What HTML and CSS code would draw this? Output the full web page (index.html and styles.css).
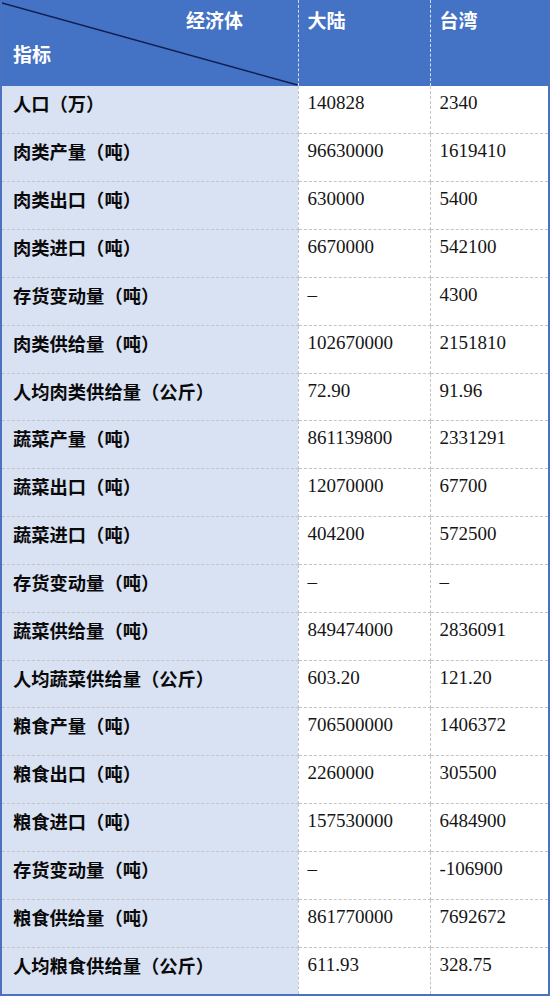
FILE: index.html
```html
<!DOCTYPE html>
<html lang="zh-CN">
<head>
<meta charset="utf-8">
<title>大陆与台湾食物供给指标</title>
<link rel="stylesheet" href="styles.css">
</head>
<body>
<table class="data">
  <colgroup>
    <col class="c1">
    <col class="c2">
    <col class="c3">
  </colgroup>
  <thead>
    <tr class="head">
      <th class="corner">
        <svg class="diag" viewBox="0 0 298 86" preserveAspectRatio="none" width="298" height="86"><line x1="0" y1="3" x2="298" y2="85" stroke="#0f1f4f" stroke-width="1.4"/></svg>
        <span class="corner-top">经济体</span>
        <span class="corner-bottom">指标</span>
      </th>
      <th class="hcol">大陆</th>
      <th class="hcol last">台湾</th>
    </tr>
  </thead>
  <tbody>
    <tr><th>人口（万）</th><td>140828</td><td>2340</td></tr>
    <tr><th>肉类产量（吨）</th><td>96630000</td><td>1619410</td></tr>
    <tr><th>肉类出口（吨）</th><td>630000</td><td>5400</td></tr>
    <tr><th>肉类进口（吨）</th><td>6670000</td><td>542100</td></tr>
    <tr><th>存货变动量（吨）</th><td>–</td><td>4300</td></tr>
    <tr><th>肉类供给量（吨）</th><td>102670000</td><td>2151810</td></tr>
    <tr><th>人均肉类供给量（公斤）</th><td>72.90</td><td>91.96</td></tr>
    <tr><th>蔬菜产量（吨）</th><td>861139800</td><td>2331291</td></tr>
    <tr><th>蔬菜出口（吨）</th><td>12070000</td><td>67700</td></tr>
    <tr><th>蔬菜进口（吨）</th><td>404200</td><td>572500</td></tr>
    <tr><th>存货变动量（吨）</th><td>–</td><td>–</td></tr>
    <tr><th>蔬菜供给量（吨）</th><td>849474000</td><td>2836091</td></tr>
    <tr><th>人均蔬菜供给量（公斤）</th><td>603.20</td><td>121.20</td></tr>
    <tr><th>粮食产量（吨）</th><td>706500000</td><td>1406372</td></tr>
    <tr><th>粮食出口（吨）</th><td>2260000</td><td>305500</td></tr>
    <tr><th>粮食进口（吨）</th><td>157530000</td><td>6484900</td></tr>
    <tr><th>存货变动量（吨）</th><td>–</td><td>-106900</td></tr>
    <tr><th>粮食供给量（吨）</th><td>861770000</td><td>7692672</td></tr>
    <tr><th>人均粮食供给量（公斤）</th><td>611.93</td><td>328.75</td></tr>
  </tbody>
</table>
</body>
</html>
```

FILE: styles.css
```css
html, body {
  margin: 0;
  padding: 0;
  background: #ffffff;
}

.data {
  border-collapse: collapse;
  table-layout: fixed;
  width: 550px;
  border-left: 2px solid #4a72c0;
  border-right: 2px solid #4a72c0;
  border-bottom: 2px solid #4a72c0;
  font-family: "Noto Sans CJK SC", "Liberation Serif", serif;
}

.c1 { width: 297px; }
.c2 { width: 132px; }
.c3 { width: 119px; }

.head th {
  height: 86px;
  box-sizing: border-box;
  padding: 0;
  background: #4472c4;
  color: #ffffff;
  font-weight: 700;
  font-size: 19px;
  line-height: 24px;
  text-align: left;
  vertical-align: top;
  border-right: 1px dashed #d5def0;
}

.head th.last {
  border-right: none;
}

.head th.hcol {
  padding: 8px 0 0 9px;
}

.corner {
  position: relative;
}

.diag {
  position: absolute;
  left: 0;
  top: 0;
  width: 100%;
  height: 100%;
}

.corner-top {
  position: absolute;
  top: 8px;
  left: 184px;
}

.corner-bottom {
  position: absolute;
  top: 42px;
  left: 11px;
}

tbody th,
tbody td {
  height: 47.85px;
  box-sizing: border-box;
  padding: 5px 0 0 10px;
  vertical-align: top;
  text-align: left;
  border-bottom: 1px dashed #c4c4c4;
  border-right: 1px dashed #c4c4c4;
  line-height: 24px;
}

tbody tr:last-child th,
tbody tr:last-child td {
  border-bottom: none;
}

tbody td:last-child {
  border-right: 1px dashed #d0d0d0;
}

tbody th {
  background: #d9e2f3;
  color: #0a0a0a;
  font-weight: 700;
  font-size: 18.3px;
  padding-left: 11px;
}

tbody td {
  background: #ffffff;
  color: #151515;
  font-family: "Liberation Serif", "Noto Sans CJK SC", serif;
  font-size: 19px;
  padding-left: 9px;
}
```
